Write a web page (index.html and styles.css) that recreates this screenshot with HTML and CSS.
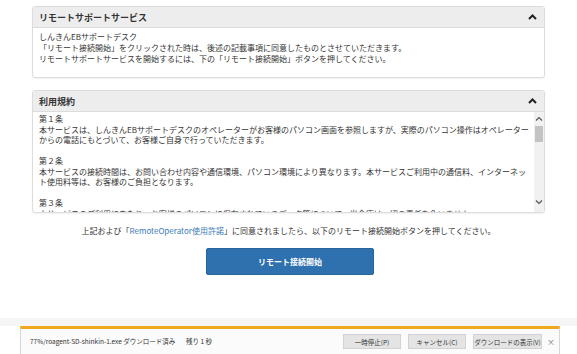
FILE: index.html
```html
<!DOCTYPE html>
<html lang="ja">
<head>
  <meta charset="UTF-8">
  <meta name="viewport" content="width=device-width, initial-scale=1.0">
  <title>リモートサポートサービス</title>
  <link rel="stylesheet" href="styles.css">
</head>
<body>
  <div class="page">
    <div class="panel">
      <div class="panel-head">
        <span>リモートサポートサービス</span>
        <svg class="chevron" width="9" height="6" viewBox="0 0 9 6"><path d="M1 5 L4.5 1.5 L8 5" fill="none" stroke="#222" stroke-width="2"/></svg>
      </div>
      <div class="panel-body">
        しんきんEBサポートデスク<br>
        「リモート接続開始」をクリックされた時は、後述の記載事項に同意したものとさせていただきます。<br>
        リモートサポートサービスを開始するには、下の「リモート接続開始」ボタンを押してください。
      </div>
    </div>

    <div class="panel">
      <div class="panel-head">
        <span>利用規約</span>
        <svg class="chevron" width="9" height="6" viewBox="0 0 9 6"><path d="M1 5 L4.5 1.5 L8 5" fill="none" stroke="#222" stroke-width="2"/></svg>
      </div>
      <div class="terms">
        <div class="terms-text">
          <p>第１条<br>
          本サービスは、しんきんEBサポートデスクのオペレーターがお客様のパソコン画面を参照しますが、実際のパソコン操作はオペレーター<br>
          からの電話にもとづいて、お客様ご自身で行っていただきます。</p>
          <p>第２条<br>
          本サービスの接続時間は、お問い合わせ内容や通信環境、パソコン環境により異なります。本サービスご利用中の通信料、インターネッ<br>
          ト使用料等は、お客様のご負担となります。</p>
          <p>第３条<br>
          本サービスのご利用にあたり、お客様のパソコンに保存されているデータ等について、当金庫は一切の責任を負いません。</p>
        </div>
        <div class="scrollbar">
          <svg width="8" height="6" viewBox="0 0 8 6"><path d="M1 4.5 L4 1.5 L7 4.5" fill="none" stroke="#555" stroke-width="1.2"/></svg>
          <div class="thumb"></div>
          <div class="track"></div>
          <svg width="8" height="6" viewBox="0 0 8 6"><path d="M1 1.5 L4 4.5 L7 1.5" fill="none" stroke="#555" stroke-width="1.2"/></svg>
        </div>
      </div>
    </div>

    <p class="notice">上記および「<a href="#">RemoteOperator使用許諾</a>」に同意されましたら、以下のリモート接続開始ボタンを押してください。</p>
    <div class="actions">
      <button class="start-btn">リモート接続開始</button>
    </div>
  </div>

  <div class="footer">
    <div class="footer-band"></div>
    <div class="download-bar">
      <span class="dl-name">77%/roagent-SD-shinkin-1.exe ダウンロード済み</span>
      <span class="dl-remain">残り 1 秒</span>
      <div class="dl-buttons">
        <button class="dl-btn">一時停止(P)</button>
        <button class="dl-btn">キャンセル(C)</button>
        <button class="dl-btn wide">ダウンロードの表示(V)</button>
      </div>
      <span class="dl-close">×</span>
    </div>
  </div>
</body>
</html>
```

FILE: styles.css
```css
body {
  margin: 0;
  height: 354px;
  display: flex;
  flex-direction: column;
  font-family: "Noto Sans CJK JP", "Noto Sans", sans-serif;
  font-size: 8px;
  line-height: 11px;
  color: #333;
  background: #fff;
  overflow: hidden;
}
.page {
  width: 513px;
  margin: 0 auto;
  padding-top: 6px;
}
.panel {
  border: 1px solid #dcdcdc;
  border-radius: 3px;
  box-shadow: 0 1px 2px rgba(0, 0, 0, 0.06);
  margin-bottom: 12px;
  background: #fff;
}
.panel-head {
  height: 20px;
  display: flex;
  justify-content: space-between;
  align-items: center;
  padding: 0 7px 0 6px;
  background: #ededed;
  border-bottom: 1px solid #dcdcdc;
  font-size: 9px;
  font-weight: bold;
  color: #333;
}
.chevron {
  display: block;
}
.panel-body {
  padding: 3px 6px 12px;
  height: 34px;
}
/* terms box with fake scrollbar */
.terms {
  display: flex;
  height: 100px;
}
.terms-text {
  flex: 1;
  overflow: hidden;
  padding: 2px 6px 0;
  white-space: nowrap;
  line-height: 10.5px;
}
.terms-text p {
  margin: 0 0 10.5px;
}
.scrollbar {
  width: 10px;
  background: #f1f1f1;
  display: flex;
  flex-direction: column;
  align-items: center;
  padding: 4px 0 7px;
  box-sizing: border-box;
}
.scrollbar svg {
  display: block;
}
.thumb {
  width: 8px;
  height: 16px;
  margin-top: 4px;
  background: #c3c3c3;
}
.track {
  flex: 1;
}
.notice {
  margin: 10px 0 0;
  text-align: center;
  font-size: 8px;
  line-height: 11px;
}
.notice a {
  color: #3a7ab8;
  text-decoration: none;
}
.actions {
  display: flex;
  justify-content: center;
  margin-top: 12px;
  padding-left: 3px;
}
.start-btn {
  width: 168px;
  height: 27px;
  background: #2f70ae;
  border: 1px solid #2a649c;
  border-radius: 2px;
  color: #fff;
  font-family: inherit;
  font-size: 8px;
  font-weight: bold;
}
/* browser download bar */
.footer {
  margin-top: auto;
  height: 36px;
  display: flex;
  flex-direction: column;
}
.footer-band {
  height: 8px;
  background: #f5f5f5;
}
.download-bar {
  flex: 1;
  margin: 0 17px 0 20px;
  border-top: 3px solid #f0a81c;
  border-left: 1px solid #d6d6d6;
  border-right: 1px solid #d6d6d6;
  background: #fbfbfb;
  display: flex;
  align-items: center;
  padding: 0 0 0 9px;
  font-size: 6.5px;
  color: #333;
  white-space: nowrap;
}
.dl-name {
  flex: none;
  width: 156px;
}
.dl-buttons {
  margin-left: auto;
  display: flex;
  gap: 7px;
}
.dl-btn {
  width: 58px;
  height: 15px;
  padding: 0;
  background: #e4e4e4;
  border: 1px solid #d2d2d2;
  font-family: inherit;
  font-size: 6.5px;
  color: #333;
  white-space: nowrap;
}
.dl-btn.wide {
  width: 69px;
}
.dl-close {
  width: 16px;
  text-align: center;
  margin-left: 1px;
  color: #777;
  font-size: 8px;
}
```
